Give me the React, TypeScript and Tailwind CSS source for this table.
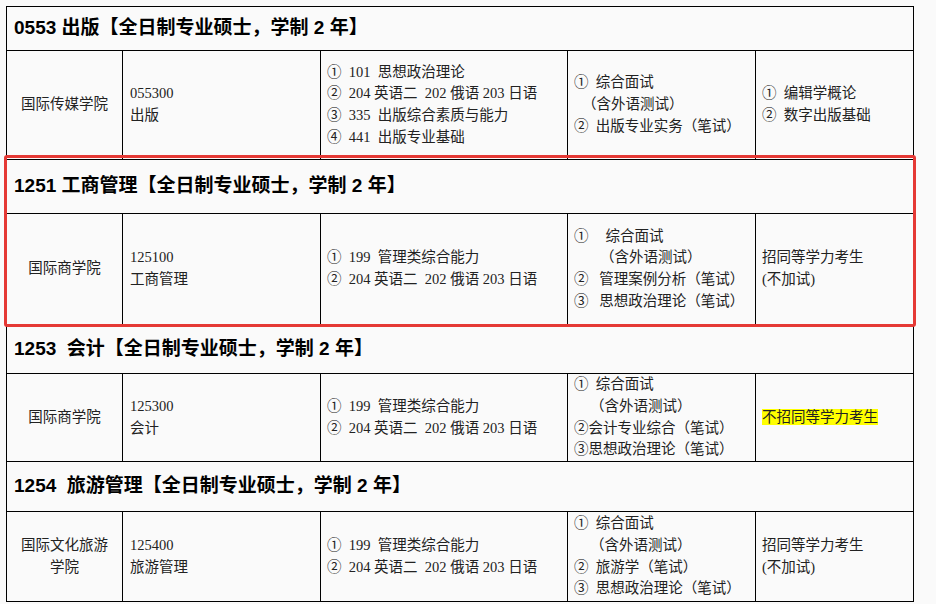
import React from 'react'

type Row = {
  school: string[]
  major: string[]
  exam: React.ReactNode[]
  retest: React.ReactNode[]
  extra: React.ReactNode
}

type Section = {
  title: string
  headerH: string
  rowH: string
  row: Row
}

const serif = '[font-family:"Liberation_Serif","Noto_Sans_CJK_SC",serif]'

const sections: Section[] = [
  {
    title: '0553 出版【全日制专业硕士，学制 2 年】',
    headerH: 'h-[44px]',
    rowH: 'h-[109px]',
    row: {
      school: ['国际传媒学院'],
      major: ['055300', '出版'],
      exam: ['①  101  思想政治理论', '②  204 英语二  202 俄语 203 日语', '③  335  出版综合素质与能力', '④  441  出版专业基础'],
      retest: [
        '①  综合面试',
        <span className="pl-[8px]">（含外语测试）</span>,
        '②  出版专业实务（笔试）',
      ],
      extra: (
        <>
          <div>①  编辑学概论</div>
          <div>②  数字出版基础</div>
        </>
      ),
    },
  },
  {
    title: '1251 工商管理【全日制专业硕士，学制 2 年】',
    headerH: 'h-[54px]',
    rowH: 'h-[111px]',
    row: {
      school: ['国际商学院'],
      major: ['125100', '工商管理'],
      exam: ['①  199  管理类综合能力', '②  204 英语二  202 俄语 203 日语'],
      retest: [
        <span>①<span className="pl-[17px]">综合面试</span></span>,
        <span className="pl-[26px]">（含外语测试）</span>,
        '②   管理案例分析（笔试）',
        '③   思想政治理论（笔试）',
      ],
      extra: (
        <>
          <div>招同等学力考生</div>
          <div>(不加试)</div>
        </>
      ),
    },
  },
  {
    title: '1253  会计【全日制专业硕士，学制 2 年】',
    headerH: 'h-[49px]',
    rowH: 'h-[88px]',
    row: {
      school: ['国际商学院'],
      major: ['125300', '会计'],
      exam: ['①  199  管理类综合能力', '②  204 英语二  202 俄语 203 日语'],
      retest: [
        '①  综合面试',
        <span className="pl-[16px]">（含外语测试）</span>,
        '②会计专业综合（笔试）',
        '③思想政治理论（笔试）',
      ],
      extra: (
        <div>
          <span className="bg-[#ffff00]">不招同等学力考生</span>
        </div>
      ),
    },
  },
  {
    title: '1254  旅游管理【全日制专业硕士，学制 2 年】',
    headerH: 'h-[50px]',
    rowH: 'h-[89px]',
    row: {
      school: ['国际文化旅游', '学院'],
      major: ['125400', '旅游管理'],
      exam: ['①  199  管理类综合能力', '②  204 英语二  202 俄语 203 日语'],
      retest: [
        '①  综合面试',
        <span className="pl-[16px]">（含外语测试）</span>,
        '②  旅游学（笔试）',
        '③  思想政治理论（笔试）',
      ],
      extra: (
        <>
          <div>招同等学力考生</div>
          <div>(不加试)</div>
        </>
      ),
    },
  },
]

function SectionBlock({ s, last }: { s: Section; last: boolean }) {
  return (
    <div>
      <div
        className={`${s.headerH} flex items-center pl-[7px] border-b border-black text-[19px] font-bold text-black [font-family:"Liberation_Sans","Noto_Sans_CJK_SC",sans-serif] whitespace-pre`}
      >
        {s.title}
      </div>
      <div
        className={`${s.rowH} grid grid-cols-[116px_198px_247px_188px_157px] ${last ? '' : 'border-b border-black'} ${serif} text-[14.5px] leading-[21.7px] text-[#222]`}
      >
        <div className="border-r border-black flex flex-col items-center justify-center text-center">
          {s.row.school.map((t, i) => (
            <div key={i}>{t}</div>
          ))}
        </div>
        <div className="border-r border-black flex flex-col justify-center pl-[7px]">
          {s.row.major.map((t, i) => (
            <div key={i}>{t}</div>
          ))}
        </div>
        <div className="border-r border-black flex flex-col justify-center pl-[6px] whitespace-pre">
          {s.row.exam.map((t, i) => (
            <div key={i}>{t}</div>
          ))}
        </div>
        <div className="border-r border-black flex flex-col justify-center pl-[6px] whitespace-pre">
          {s.row.retest.map((t, i) => (
            <div key={i}>{t}</div>
          ))}
        </div>
        <div className="flex flex-col justify-center pl-[6px] whitespace-pre">{s.row.extra}</div>
      </div>
    </div>
  )
}

export default function App() {
  return (
    <div className="w-[936px] h-[604px] bg-[#fafafa] pt-[6px] pl-[6px] overflow-hidden">
      <div className="relative w-[908px] border border-black">
        {sections.map((s, i) => (
          <SectionBlock key={i} s={s} last={i === sections.length - 1} />
        ))}
        {/* highlight box around 1251 */}
        <div className="absolute left-[-3px] top-[148px] w-[912px] h-[172px] border-[3px] border-[#e53935] rounded-[3px] pointer-events-none" />
      </div>
    </div>
  )
}
